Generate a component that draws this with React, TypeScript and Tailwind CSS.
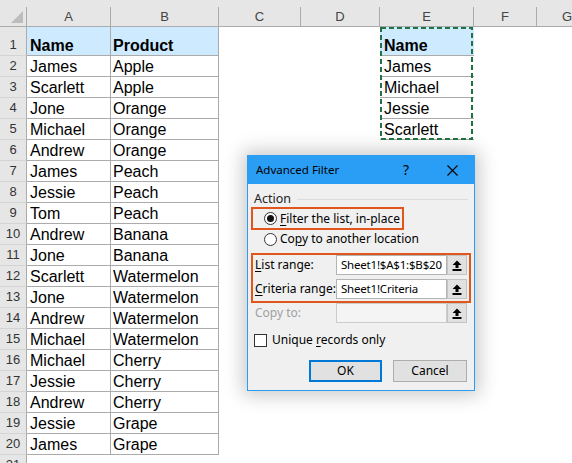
import React from 'react'

const names = ['James', 'Scarlett', 'Jone', 'Michael', 'Andrew', 'James', 'Jessie', 'Tom', 'Andrew', 'Jone', 'Scarlett', 'Jone', 'Andrew', 'Michael', 'Michael', 'Jessie', 'Andrew', 'Jessie', 'James']
const products = ['Apple', 'Apple', 'Orange', 'Orange', 'Orange', 'Peach', 'Peach', 'Peach', 'Banana', 'Banana', 'Watermelon', 'Watermelon', 'Watermelon', 'Watermelon', 'Cherry', 'Cherry', 'Cherry', 'Grape', 'Grape']
const criteria = ['Name', 'James', 'Michael', 'Jessie', 'Scarlett']

const rows = Array.from({ length: 21 }, (_, i) => i + 1)

function ColHead({ label, w }: { label: string; w: string }) {
  return (
    <div className={`${w} h-full flex items-end shrink-0`}>
      <div className="h-[19px] w-full border-r border-[#ababab] flex items-center justify-center">{label}</div>
    </div>
  )
}

function SheetRow({ n }: { n: number }) {
  const head = n === 1
  const inTable = n <= 20
  const a = head ? 'Name' : names[n - 2]
  const b = head ? 'Product' : products[n - 2]
  const e = criteria[n - 1]
  const tableCell = inTable ? 'border-r border-b border-[#ababab]' : ''
  const fill = head ? 'bg-[#cdeaff] font-bold' : ''
  return (
    <div className={`flex ${head ? 'h-[29px]' : 'h-[21px]'} text-[16px] leading-[19px]`}>
      <div className="w-[27px] shrink-0 bg-[#e6e6e6] border-r border-b border-r-[#ababab] border-b-[#d4d4d4] flex items-end justify-center text-[13px] text-[#333] font-['Liberation_Sans',Arial,sans-serif]">
        <span className="pb-px">{n}</span>
      </div>
      <div className={`w-[84px] shrink-0 flex items-end pl-[3px] ${tableCell} ${fill}`}>{inTable ? a : ''}</div>
      <div className={`w-[108px] shrink-0 flex items-end pl-[2px] ${tableCell} ${fill}`}>{inTable ? b : ''}</div>
      <div className="w-[82px] shrink-0" />
      <div className="w-[79px] shrink-0" />
      <div className={`w-[94px] shrink-0 flex items-end pl-[4px] ${e ? 'border-b border-[#ababab]' : ''} ${head ? 'bg-[#cdeaff] font-bold' : ''}`}>{e ?? ''}</div>
      <div className="w-[63px] shrink-0" />
      <div className="flex-1" />
    </div>
  )
}

function UpArrow() {
  return (
    <svg width="10" height="11" viewBox="0 0 10 11">
      <path d="M5 0.5 L9.5 5 L6.5 5 L6.5 8 L3.5 8 L3.5 5 L0.5 5 Z" fill="#000" />
      <rect x="0.5" y="9" width="9" height="2" fill="#000" />
    </svg>
  )
}

function RefRow({ label, value, disabled }: { label: React.ReactNode; value: string; disabled?: boolean }) {
  return (
    <div className="h-[20px] flex items-center">
      <div className={`w-[83px] pl-[2px] whitespace-nowrap ${disabled ? 'text-[#a0a0a0]' : ''}`}>{label}</div>
      <div className={`w-[111px] h-full border ${disabled ? 'border-[#cccccc] bg-[#f4f4f4]' : 'border-[#b4b4b4] bg-white'} flex items-center pl-[4px] text-[11.5px] tracking-[-0.2px] whitespace-nowrap overflow-hidden`}>
        {value}
      </div>
      <div className="w-[20px] h-full bg-[#e1e1e1] border border-[#c4c4c4] flex items-center justify-center">
        <UpArrow />
      </div>
    </div>
  )
}

function Dialog() {
  return (
    <div className="absolute left-[247px] top-[155px] w-[228px] h-[236px] border border-[#2a9df4] bg-[#f0f0f0] shadow-[0_0_18px_4px_rgba(0,0,0,0.22)] font-['Noto_Sans',sans-serif] text-[12px] leading-[16px] text-black flex flex-col">
      <div className="h-[28px] shrink-0 bg-[#2a9df4] flex items-center pl-[8px]">
        <span className="text-[11.5px]">Advanced Filter</span>
        <span className="ml-auto w-[16px] text-center text-[14px]">?</span>
        <span className="ml-[16px] w-[44px] flex items-center justify-center">
          <svg width="11" height="11" viewBox="0 0 11 11">
            <path d="M0.5 0.5 L10.5 10.5 M10.5 0.5 L0.5 10.5" stroke="#000" strokeWidth="1.1" />
          </svg>
        </span>
      </div>

      <div className="flex flex-col">
        <div className="mt-[8px] h-[14px] flex items-center px-[6px]">
          <span className="text-[#222] text-[12.5px]">Action</span>
          <div className="flex-1 ml-[6px] h-px bg-[#dcdcdc]" />
        </div>

        <div className="mt-[1px] ml-[3px] w-[153px] h-[23px] border-2 border-[#e2561b] flex items-center pl-[11px] gap-[3px]">
          <span className="w-[13px] h-[13px] rounded-full border border-[#333] bg-white flex items-center justify-center shrink-0">
            <span className="w-[7px] h-[7px] rounded-full bg-[#111]" />
          </span>
          <span className="whitespace-nowrap"><u className="underline-offset-2">F</u>ilter the list, in-place</span>
        </div>

        <div className="h-[18px] flex items-center pl-[16px] gap-[3px]">
          <span className="w-[13px] h-[13px] rounded-full border border-[#333] bg-white shrink-0" />
          <span className="whitespace-nowrap">Co<u className="underline-offset-2">p</u>y to another location</span>
        </div>

        <div className="mt-[5px] ml-[3px] w-[220px] h-[50px] border-2 border-[#e2561b] flex flex-col">
          <RefRow label={<><u className="underline-offset-2">L</u>ist range:</>} value="Sheet1!$A$1:$B$20" />
          <div className="mt-[4px]">
            <RefRow label={<><u className="underline-offset-2">C</u>riteria range:</>} value="Sheet1!Criteria" />
          </div>
        </div>

        <div className="ml-[5px] w-[216px]">
          <RefRow label="Copy to:" value="" disabled />
        </div>

        <div className="mt-[10px] h-[14px] flex items-center pl-[6px] gap-[5px]">
          <span className="w-[13px] h-[13px] border border-[#333] bg-white shrink-0" />
          <span className="whitespace-nowrap">Unique <u className="underline-offset-2">r</u>ecords only</span>
        </div>

        <div className="mt-[13px] h-[22px] flex justify-end pr-[7px] gap-[11px]">
          <div className="w-[73px] h-full bg-[#e1e1e1] border-2 border-[#0078d7] flex items-center justify-center">OK</div>
          <div className="w-[74px] h-full bg-[#e1e1e1] border border-[#adadad] flex items-center justify-center">Cancel</div>
        </div>
      </div>
    </div>
  )
}

export default function App() {
  return (
    <div className="relative w-[572px] h-[463px] overflow-hidden bg-white font-['Liberation_Sans',Arial,sans-serif] text-black">
      <div className="flex h-[27px] bg-[#e6e6e6] border-b border-[#ababab] text-[13px] text-[#444]">
        <div className="w-[27px] h-full shrink-0 flex items-end">
          <div className="h-[19px] w-full border-r border-[#ababab] relative">
            <svg width="26" height="19" viewBox="0 0 26 19" className="absolute left-0 top-0">
              <polygon points="23,4 23,16 11,16" fill="#bdbdbd" />
            </svg>
          </div>
        </div>
        <ColHead label="A" w="w-[84px]" />
        <ColHead label="B" w="w-[108px]" />
        <ColHead label="C" w="w-[82px]" />
        <ColHead label="D" w="w-[79px]" />
        <ColHead label="E" w="w-[94px]" />
        <ColHead label="F" w="w-[63px]" />
        <div className="flex-1 h-full flex items-end">
          <div className="h-[19px] w-[60px] flex items-center justify-center">G</div>
        </div>
      </div>

      {rows.map(n => (
        <SheetRow key={n} n={n} />
      ))}

      <svg width="95" height="113" className="absolute left-[379px] top-[27px] pointer-events-none">
        <rect x="2" y="1" width="91" height="111" fill="none" stroke="#217346" strokeWidth="2" strokeDasharray="5 3" />
      </svg>

      <Dialog />
    </div>
  )
}
